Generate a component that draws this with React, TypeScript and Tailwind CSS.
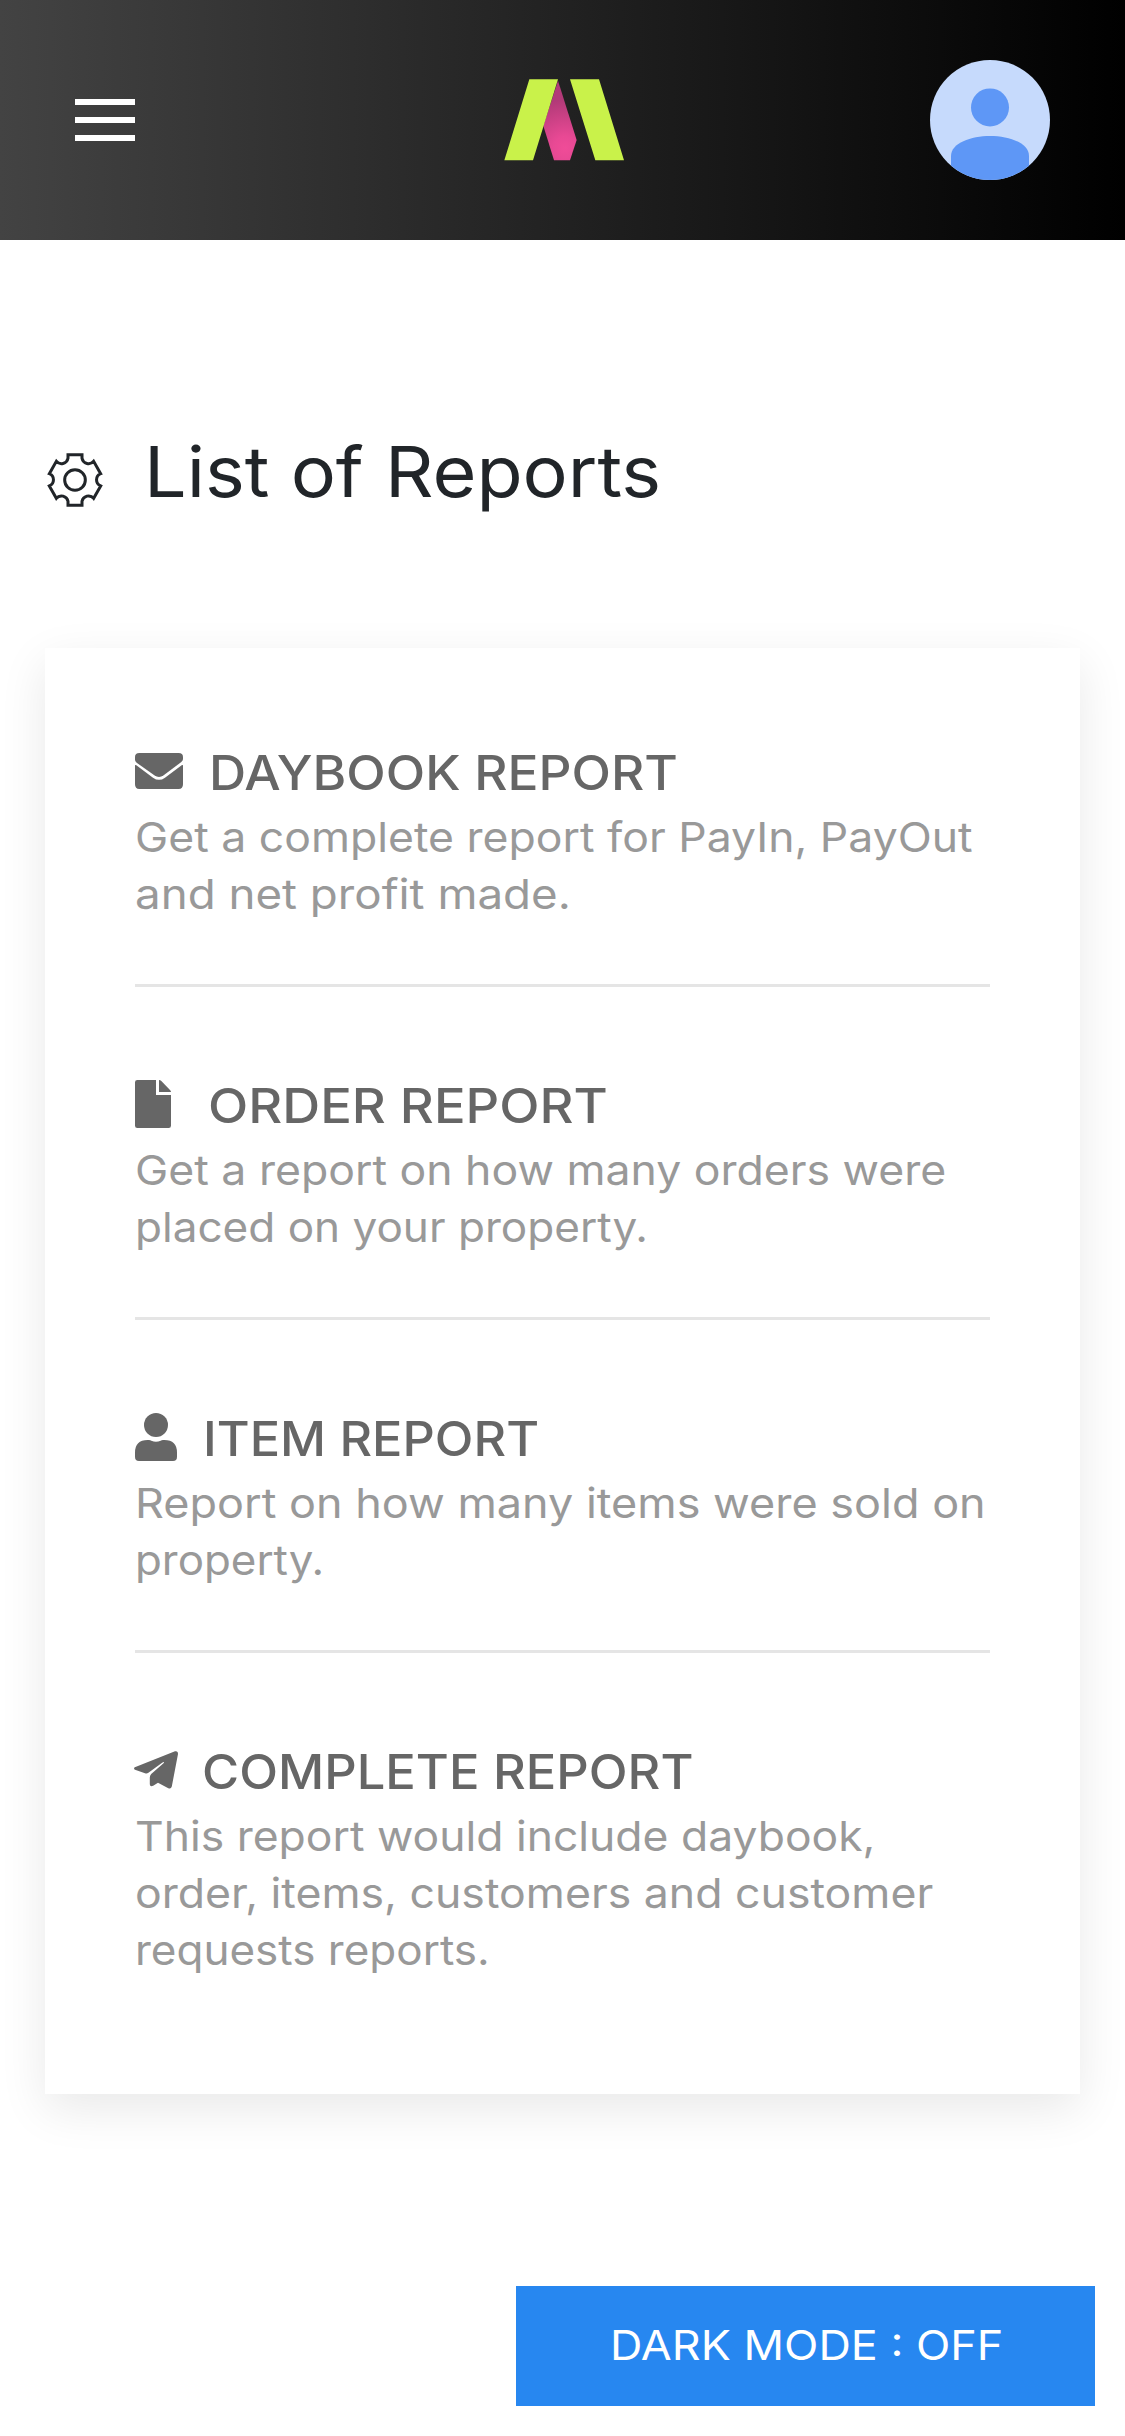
import type { ReactNode } from "react";

type Line = { text: string; stretch: string };
type Report = {
  title: Line;
  icon: ReactNode;
  iconSlot: string;
  lines: Line[];
};

const EnvelopeIcon = () => (
  <svg viewBox="0 0 144 108" className="mt-[9px] h-9 w-12 fill-current">
    <path d="M0 12Q0 0 13 0H131Q144 0 144 12V18Q144 23 139 27L86 67Q72 77 58 67L5 29Q0 25 0 20Z" />
    <path d="M0 37Q1 35 4 37L54 74Q72 87 90 74L140 37Q143 35 144 37V94Q144 108 131 108H13Q0 108 0 94Z" />
  </svg>
);

const FileIcon = () => (
  <svg viewBox="0 0 108 144" className="mt-[3px] h-12 w-9 fill-current">
    <path d="M7 0H63V45H108V137Q108 144 101 144H7Q0 144 0 137V7Q0 0 7 0Z" />
    <path d="M72 0Q76 0 79 3L105 30Q108 33 108 36H72Z" />
  </svg>
);

const UserIcon = () => (
  <svg viewBox="0 0 126 144" className="mt-[3px] h-12 w-[42px] fill-current">
    <circle cx="63" cy="36" r="36" />
    <path d="M0 119Q0 81 38 81H42Q46 81 49 83Q63 89 77 83Q80 81 84 81H88Q126 81 126 119V131Q126 144 114 144H12Q0 144 0 131Z" />
  </svg>
);

const PlaneIcon = () => (
  <svg viewBox="0 0 44 38" className="-ml-px mt-2 h-[38px] w-11 fill-current">
    <path d="M41 .3Q44 -.4 44 3L37.8 35.5Q37 38.4 34.3 37.2L24 31.8L19.2 34.8Q16 36.3 15.8 33.2V26.5Q15.8 24.4 17.2 22.9L29.8 11.9Q30.6 10.4 28.5 11.5L14.4 21.8Q12.8 23 11 22.2L1 18.8Q-.8 17.5 .8 16.2Z" />
  </svg>
);

const GearIcon = () => (
  <svg viewBox="0 0 210 210" className="mt-[18px] size-[70px] shrink-0 fill-none stroke-[#212529]">
    <path
      strokeWidth="9"
      d="M84 29H126V40A20 20 0 0 0 161 49L182 86A20 20 0 0 0 182 123L161 160A20 20 0 0 0 126 169V181H84V169A20 20 0 0 0 49 160L28 123A20 20 0 0 0 28 86L49 49A20 20 0 0 0 84 40Z"
    />
    <circle cx="105" cy="105" r="31" strokeWidth="9" />
  </svg>
);

const Logo = () => (
  <svg viewBox="72 87 360 246" className="ml-0.5 h-[82px] w-[120px]">
    <defs>
      <radialGradient id="petal" gradientUnits="userSpaceOnUse" cx="255" cy="295" r="145">
        <stop offset="0" stopColor="#f04c98" />
        <stop offset="0.25" stopColor="#e84994" />
        <stop offset="1" stopColor="#b23a78" />
      </radialGradient>
    </defs>
    <path fill="url(#petal)" d="M234 92L290 270L270 331H222L190 227Z" />
    <path fill="#c9f24a" d="M148 88H234L159 331H73ZM270 88H357L432 331H346Z" />
  </svg>
);

const Avatar = () => (
  <svg viewBox="0 0 120 120" className="size-[120px] rounded-full bg-[#c6dafc]">
    <g fill="#5e97f6">
      <circle cx="60" cy="47.4" r="19" />
      <path d="M21 96C21 83 41 76 60 76S99 83 99 96V120H21Z" />
    </g>
  </svg>
);

const reports: Report[] = [
  {
    title: { text: "DAYBOOK REPORT", stretch: "scale-x-[1.071]" },
    icon: <EnvelopeIcon />,
    iconSlot: "w-[74px]",
    lines: [
      { text: "Get a complete report for PayIn, PayOut", stretch: "scale-x-[1.086]" },
      { text: "and net profit made.", stretch: "scale-x-[1.114]" },
    ],
  },
  {
    title: { text: "ORDER REPORT", stretch: "scale-x-[1.094]" },
    icon: <FileIcon />,
    iconSlot: "w-[73px]",
    lines: [
      { text: "Get a report on how many orders were", stretch: "scale-x-[1.087]" },
      { text: "placed on your property.", stretch: "scale-x-[1.075]" },
    ],
  },
  {
    title: { text: "ITEM REPORT", stretch: "scale-x-[1.05]" },
    icon: <UserIcon />,
    iconSlot: "w-[68px]",
    lines: [
      { text: "Report on how many items were sold on", stretch: "scale-x-[1.097]" },
      { text: "property.", stretch: "scale-x-[1.07]" },
    ],
  },
  {
    title: { text: "COMPLETE REPORT", stretch: "scale-x-[1.055]" },
    icon: <PlaneIcon />,
    iconSlot: "w-[67px]",
    lines: [
      { text: "This report would include daybook,", stretch: "scale-x-[1.084]" },
      { text: "order, items, customers and customer", stretch: "scale-x-[1.088]" },
      { text: "requests reports.", stretch: "scale-x-[1.073]" },
    ],
  },
];

function ReportItem({ report }: { report: Report }) {
  return (
    <li className="border-b-[3px] border-[#e5e5e5] pb-[61px] last:border-0 last:pb-0 not-first:pt-[90px]">
      <div className="flex text-[#666]">
        <span className={`${report.iconSlot} shrink-0`}>{report.icon}</span>
        <h2 className={`origin-left text-[48px] leading-[57px] font-medium whitespace-nowrap ${report.title.stretch}`}>
          {report.title.text}
        </h2>
      </div>
      <p className="mt-2 text-[41px] leading-[57px] text-[#999]">
        {report.lines.map((line) => (
          <span key={line.text} className={`block w-fit origin-left whitespace-nowrap ${line.stretch}`}>
            {line.text}
          </span>
        ))}
      </p>
    </li>
  );
}

export default function App() {
  return (
    <div className="flex min-h-[2436px] w-[1125px] flex-col overflow-hidden bg-white font-['Inter',sans-serif]">
      <header className="flex h-60 items-center justify-between bg-[linear-gradient(to_right,#434343,#000)] px-[75px]">
        <button aria-label="Menu" className="mr-[60px] flex w-[60px] flex-col gap-3">
          <span className="h-1.5 bg-white" />
          <span className="h-1.5 bg-white" />
          <span className="h-1.5 bg-white" />
        </button>
        <Logo />
        <Avatar />
      </header>

      <main className="flex flex-col">
        <div className="flex pt-[187px] pl-10">
          <GearIcon />
          <h1 className="ml-[34px] origin-left scale-x-[1.07] text-[70.5px] leading-[90px] text-[#212529]">
            List of Reports
          </h1>
        </div>

        <ul className="mx-[45px] mt-[131px] bg-white px-[90px] pt-24 pb-[115px] shadow-[0_15px_45px_rgba(0,0,0,0.09)]">
          {reports.map((report) => (
            <ReportItem key={report.title.text} report={report} />
          ))}
        </ul>

        <button className="mt-48 mr-[30px] h-[120px] w-[579px] self-end bg-[#2787f0] pl-[94px] text-[41px] whitespace-nowrap text-white">
          <span className="block w-fit origin-left scale-x-[1.095]">DARK MODE : OFF</span>
        </button>
      </main>
    </div>
  );
}
